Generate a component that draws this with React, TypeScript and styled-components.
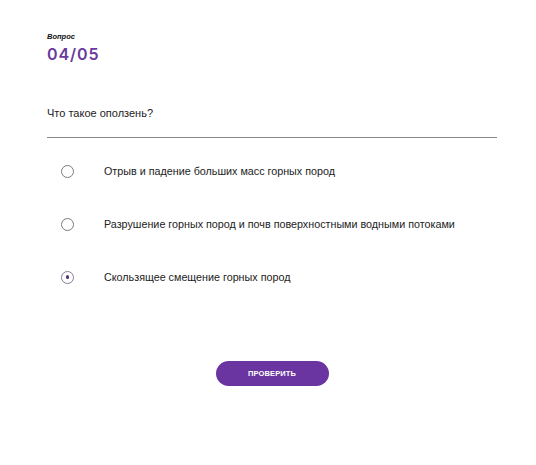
import React, { useState } from "react";
import styled, { createGlobalStyle } from "styled-components";

const Global = createGlobalStyle`
  html, body { margin: 0; padding: 0; background: #fff; }
  body { font-family: "Liberation Sans", Arial, sans-serif; color: #222; }
`;

const Page = styled.div`
  width: 536px;
  padding: 32px 39px 0 47px;
  box-sizing: border-box;
`;

const Label = styled.div`
  font-size: 7.5px;
  font-weight: 700;
  font-style: italic;
  color: #111;
  line-height: 10px;
`;

const Counter = styled.div`
  font-family: Inter, sans-serif;
  font-size: 16px;
  font-weight: 600;
  color: #6b3a9e;
  line-height: 20px;
  margin-top: 2px;
  letter-spacing: 0.9px;
`;

const Question = styled.div`
  margin-top: 42px;
  font-size: 11px;
  line-height: 14px;
  color: #222;
  padding-bottom: 17px;
  border-bottom: 1px solid #8a8a8a;
`;

const Options = styled.div`
  display: flex;
  flex-direction: column;
  gap: 39px;
  margin-top: 26px;
`;

const Option = styled.label`
  display: flex;
  align-items: center;
  gap: 30px;
  padding-left: 14px;
  font-size: 10.75px;
  line-height: 14px;
  color: #222;
  cursor: pointer;
`;

const Radio = styled.span<{ $checked: boolean }>`
  width: 13px;
  height: 13px;
  box-sizing: border-box;
  border-radius: 50%;
  border: 1px solid ${(p) => (p.$checked ? "#8a7a96" : "#7a7a7a")};
  display: flex;
  align-items: center;
  justify-content: center;
  flex-shrink: 0;
  &::after {
    content: "";
    width: 3.5px;
    height: 3.5px;
    border-radius: 50%;
    background: #5a2d82;
    display: ${(p) => (p.$checked ? "block" : "none")};
  }
`;

const Footer = styled.div`
  display: flex;
  justify-content: center;
  margin-top: 77px;
`;

const Button = styled.button`
  width: 113px;
  height: 25px;
  border: none;
  border-radius: 13px;
  background: #6a35a0;
  color: #fff;
  font-family: "Liberation Sans", Arial, sans-serif;
  font-size: 7.5px;
  font-weight: 700;
  letter-spacing: 0.1px;
  cursor: pointer;
`;

const answers = [
  "Отрыв и падение больших масс горных пород",
  "Разрушение горных пород и почв поверхностными водными потоками",
  "Скользящее смещение горных пород",
];

export default function App() {
  const [sel, setSel] = useState(2);
  return (
    <>
      <Global />
      <Page>
        <Label>Вопрос</Label>
        <Counter>04/05</Counter>
        <Question>Что такое оползень?</Question>
        <Options>
          {answers.map((a, i) => (
            <Option key={i} onClick={() => setSel(i)}>
              <Radio $checked={sel === i} />
              {a}
            </Option>
          ))}
        </Options>
        <Footer>
          <Button>ПРОВЕРИТЬ</Button>
        </Footer>
      </Page>
    </>
  );
}
